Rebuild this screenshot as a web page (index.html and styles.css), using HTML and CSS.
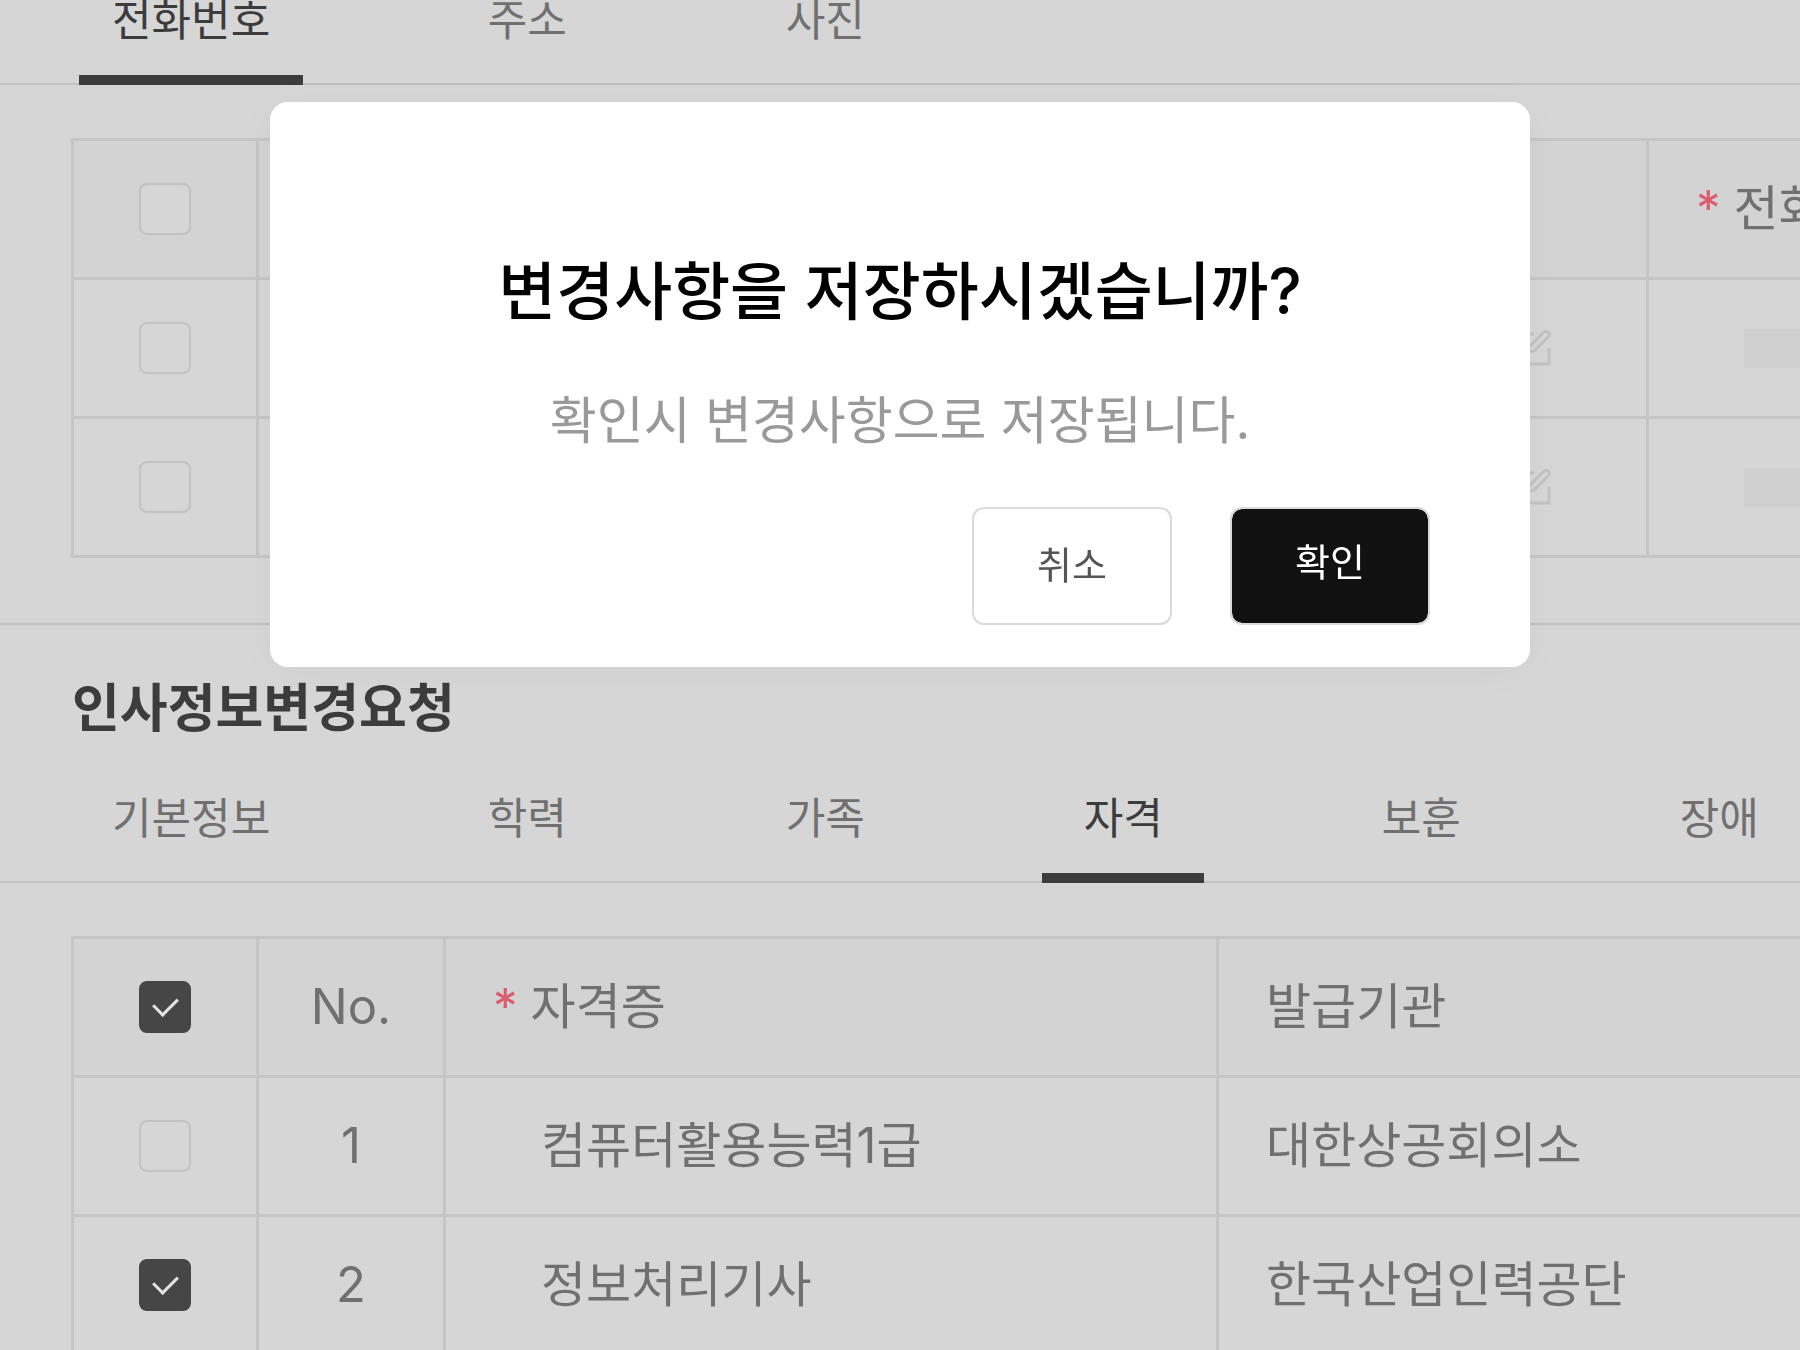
FILE: index.html
```html
<!DOCTYPE html>
<html lang="ko">
<head>
<meta charset="utf-8">
<meta name="viewport" content="width=device-width, initial-scale=1">
<title>인사정보변경요청</title>
<link rel="stylesheet" href="styles.css">
</head>
<body>
<svg class="symbols" aria-hidden="true">
  <symbol id="edit" viewBox="0 0 36 36">
    <path d="M19 4H2V34H34V18" fill="none" stroke="currentColor" stroke-width="3"/>
    <path d="M14 17L28 3Q31 0 33 2Q36 4 33 7L19 21L13 22Z" fill="none" stroke="currentColor" stroke-width="3"/>
  </symbol>
</svg>
<main class="page">
  <section class="panel panel-contact">
    <nav class="tabs">
      <a class="tab tab-wide tab-active" href="#phone">전화번호</a>
      <a class="tab" href="#address">주소</a>
      <a class="tab" href="#photo">사진</a>
    </nav>
    <div class="table-area">
      <table class="grid">
        <colgroup><col class="col-check"><col class="col-kind"><col></colgroup>
        <thead>
          <tr>
            <th class="center"><input class="check" type="checkbox" aria-label="전체 선택"></th>
            <th></th>
            <th><span class="required">*</span>전화번호</th>
          </tr>
        </thead>
        <tbody>
          <tr>
            <td class="center"><input class="check" type="checkbox" aria-label="1행 선택"></td>
            <td class="edit-cell"><svg class="edit-icon"><use href="#edit"/></svg></td>
            <td class="indent"><span class="placeholder"></span></td>
          </tr>
          <tr>
            <td class="center"><input class="check" type="checkbox" aria-label="2행 선택"></td>
            <td class="edit-cell"><svg class="edit-icon"><use href="#edit"/></svg></td>
            <td class="indent"><span class="placeholder"></span></td>
          </tr>
        </tbody>
      </table>
    </div>
  </section>
  <section class="panel panel-request">
    <h2 class="panel-title">인사정보변경요청</h2>
    <nav class="tabs">
      <a class="tab tab-wide" href="#basic">기본정보</a>
      <a class="tab" href="#school">학력</a>
      <a class="tab" href="#family">가족</a>
      <a class="tab tab-active" href="#license">자격</a>
      <a class="tab" href="#veteran">보훈</a>
      <a class="tab" href="#disability">장애</a>
    </nav>
    <div class="table-area">
      <table class="grid">
        <colgroup><col class="col-check"><col class="col-number"><col class="col-license"><col></colgroup>
        <thead>
          <tr>
            <th class="center"><input class="check" type="checkbox" aria-label="전체 선택" checked></th>
            <th class="center">No.</th>
            <th><span class="required">*</span>자격증</th>
            <th>발급기관</th>
          </tr>
        </thead>
        <tbody>
          <tr>
            <td class="center"><input class="check" type="checkbox" aria-label="1행 선택"></td>
            <td class="center">1</td>
            <td class="indent">컴퓨터활용능력1급</td>
            <td>대한상공회의소</td>
          </tr>
          <tr>
            <td class="center"><input class="check" type="checkbox" aria-label="2행 선택" checked></td>
            <td class="center">2</td>
            <td class="indent">정보처리기사</td>
            <td>한국산업인력공단</td>
          </tr>
        </tbody>
      </table>
    </div>
  </section>
</main>
<div class="backdrop">
  <div class="dialog" role="dialog" aria-modal="true" aria-labelledby="dialog-title">
    <h1 class="dialog-title" id="dialog-title">변경사항을 저장하시겠습니까?</h1>
    <p class="dialog-text">확인시 변경사항으로 저장됩니다.</p>
    <div class="actions">
      <button class="button" type="button">취소</button>
      <button class="button button-primary" type="button">확인</button>
    </div>
  </div>
</div>
</body>
</html>
```

FILE: styles.css
```css
* { box-sizing: border-box; }

body {
  margin: 0;
  background: #d6d6d6;
  color: #707070;
  font-family: Inter, "Noto Sans CJK KR", sans-serif;
  overflow: hidden;
}

.symbols { display: none; }

.page { height: 100vh; overflow: hidden; }

.panel-contact { border-bottom: 2px solid #c0c0c0; padding-bottom: 65px; }

.panel-title {
  margin: 0;
  padding: 48px 72px 16px;
  color: #3c3c3c;
  font-size: 52px;
  line-height: 72px;
  font-weight: 700;
}

.tabs {
  display: flex;
  gap: 136px;
  padding-left: 79px;
  border-bottom: 2px solid #c0c0c0;
  white-space: nowrap;
}

.tab {
  flex: none;
  min-width: 162px;
  margin-bottom: -2px;
  padding: 37px 33px 35px;
  border-bottom: 10px solid transparent;
  color: #707070;
  font-size: 43px;
  line-height: 40px;
  text-align: center;
  text-decoration: none;
}

.panel-contact .tab { padding-top: 0; }
.tab-wide { margin-right: 7px; }
.tab-active { border-color: #3c3c3c; color: #3c3c3c; }

.table-area { padding: 53px 0 0 71px; overflow: hidden; }

.grid {
  width: 120%;
  table-layout: fixed;
  border-collapse: collapse;
  font-size: 49px;
  line-height: 64px;
  white-space: nowrap;
}

.col-check { width: 185px; }
.col-number { width: 187px; }
.col-license { width: 773px; }
.col-kind { width: 1390px; }

.grid th, .grid td {
  height: 139px;
  padding: 0 47px;
  border: 3px solid #c5c5c5;
  font-weight: 400;
  text-align: left;
}

.grid th { background: #d3d3d3; }
.grid .center { padding: 0; text-align: center; }
.grid .indent { padding-left: 95px; }
.grid .edit-cell { padding-right: 95px; }

.required { margin-right: 13px; color: #dc5b6c; }

.edit-icon { display: block; width: 36px; height: 36px; margin-left: auto; color: #c2c2c2; }

.placeholder { display: block; width: 400px; height: 39px; background: #cfcfcf; }

.check {
  appearance: none;
  display: block;
  width: 52px;
  height: 52px;
  margin: 0 auto;
  border: 2px solid #c2c2c2;
  border-radius: 8px;
  background: #d6d6d6;
}

.check:checked {
  display: grid;
  place-content: center;
  border-color: #464646;
  background: #464646;
}

.check:checked::before {
  content: "";
  width: 20px;
  height: 12px;
  margin-bottom: 8px;
  border: solid #e2e2e2;
  border-width: 0 0 3px 3px;
  rotate: -45deg;
}

.backdrop {
  position: fixed;
  inset: 0;
  display: flex;
  align-items: flex-start;
  justify-content: center;
  padding-top: 102px;
}

.dialog {
  width: 70%;
  padding: 145px 100px 42px;
  border-radius: 18px;
  background: #fff;
  box-shadow: 0 4px 40px rgba(0, 0, 0, 0.03);
  text-align: center;
}

.dialog-title {
  margin: 0;
  color: #000;
  font-size: 63px;
  line-height: 88px;
  font-weight: 500;
}

.dialog-text {
  margin: 48px 0;
  color: #999;
  font-size: 51px;
  line-height: 76px;
}

.actions { display: flex; justify-content: flex-end; gap: 58px; }

.button {
  width: 200px;
  height: 118px;
  padding: 0 0 2px;
  border: 2px solid #dadada;
  border-radius: 12px;
  background: #fff;
  color: #555;
  font: inherit;
  font-size: 38px;
  line-height: 48px;
}

.button-primary { padding-bottom: 8px; background: #111; background-clip: padding-box; color: #fff; }
```
